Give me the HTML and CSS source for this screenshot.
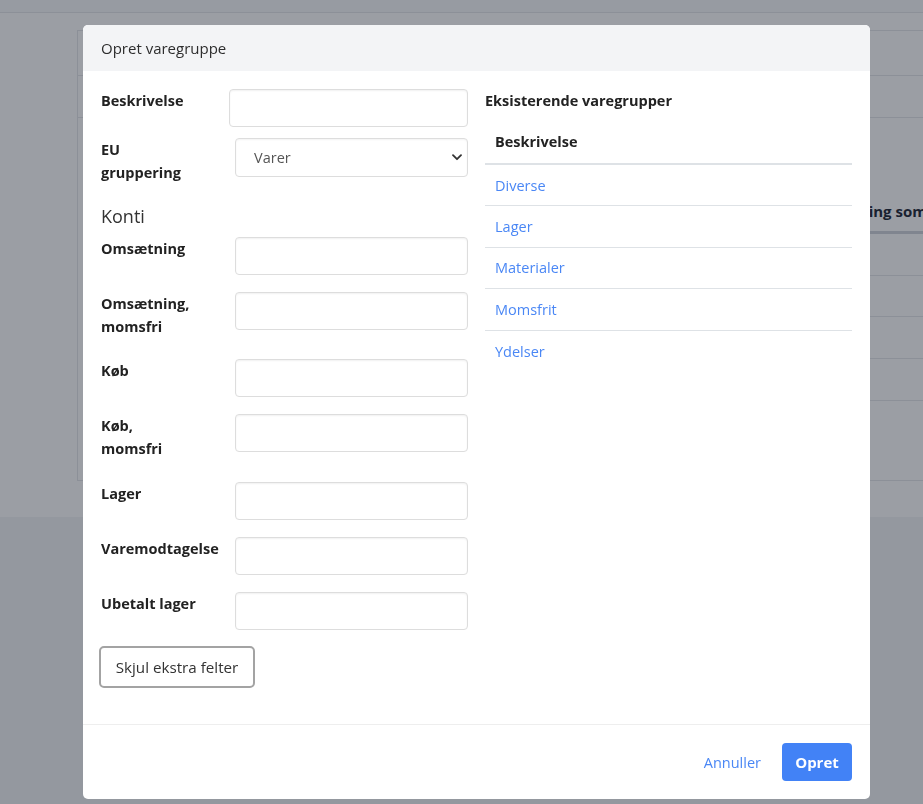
FILE: index.html
```html
<!DOCTYPE html>
<html lang="da">
<head>
<meta charset="utf-8">
<title>Opret varegruppe</title>
<link rel="stylesheet" href="styles.css">
</head>
<body>
<div class="page">
  <div class="topbar"></div>
  <div class="main">
    <div class="card">
      <div class="card-head"></div>
      <div class="card-tabs"></div>
      <div class="card-body">
        <div class="bg-row bg-row-head"><span></span><span>Visning som standard</span></div>
        <div class="bg-row"><span></span><span></span></div>
        <div class="bg-row"><span></span><span></span></div>
        <div class="bg-row"><span></span><span></span></div>
        <div class="bg-row"><span></span><span></span></div>
      </div>
    </div>
  </div>
</div>

<div class="overlay"></div>

<div class="modal">
  <div class="modal-head">Opret varegruppe</div>
  <div class="modal-body">
    <div class="col-left">
      <div class="frow frow-first">
        <label class="flabel">Beskrivelse</label>
        <input class="finput" type="text">
      </div>
      <div class="frow frow-eu">
        <label class="flabel">EU<br>gruppering</label>
        <div class="select-wrap">
          <select class="fselect"><option>Varer</option></select>
          <svg class="chev" width="10" height="7" viewBox="0 0 10 7"><path d="M1 1.2 5 5.2 9 1.2" fill="none" stroke="#333" stroke-width="1.8" stroke-linecap="round" stroke-linejoin="round"/></svg>
        </div>
      </div>
      <h3 class="konti">Konti</h3>
      <div class="frow">
        <label class="flabel">Omsætning</label>
        <input class="finput" type="text">
      </div>
      <div class="frow">
        <label class="flabel">Omsætning,<br>momsfri</label>
        <input class="finput" type="text">
      </div>
      <div class="frow">
        <label class="flabel">Køb</label>
        <input class="finput" type="text">
      </div>
      <div class="frow">
        <label class="flabel">Køb,<br>momsfri</label>
        <input class="finput" type="text">
      </div>
      <div class="frow">
        <label class="flabel">Lager</label>
        <input class="finput" type="text">
      </div>
      <div class="frow">
        <label class="flabel">Varemodtagelse</label>
        <input class="finput" type="text">
      </div>
      <div class="frow frow-last">
        <label class="flabel">Ubetalt lager</label>
        <input class="finput" type="text">
      </div>
      <button class="btn-toggle" type="button">Skjul ekstra felter</button>
    </div>
    <div class="col-right">
      <div class="exist-title">Eksisterende varegrupper</div>
      <table class="gtable">
        <thead><tr><th>Beskrivelse</th></tr></thead>
        <tbody>
          <tr><td><a href="#">Diverse</a></td></tr>
          <tr><td><a href="#">Lager</a></td></tr>
          <tr><td><a href="#">Materialer</a></td></tr>
          <tr><td><a href="#">Momsfrit</a></td></tr>
          <tr><td><a href="#">Ydelser</a></td></tr>
        </tbody>
      </table>
    </div>
  </div>
  <div class="modal-foot">
    <a class="btn-link" href="#">Annuller</a>
    <button class="btn-primary" type="button">Opret</button>
  </div>
</div>
</body>
</html>
```
FILE: styles.css
```css
* { box-sizing: border-box; }
html, body { margin: 0; padding: 0; }
body {
  font-family: "Open Sans", "Noto Sans", "Liberation Sans", sans-serif;
  font-size: 14px;
  color: #212529;
  background: #f3f4f6;
  width: 923px;
  height: 804px;
  overflow: hidden;
}

/* background page */
.page { width: 923px; }
.topbar {
  height: 13px;
  background: #f9fafb;
  border-bottom: 1px solid #e5e7eb;
}
.main {
  background: #ffffff;
  height: 504px;
  padding: 17px 0 0 77px;
}
.card {
  width: 1000px;
  height: 451px;
  border: 1px solid #e5e7eb;
  background: #fff;
}
.card-head { height: 45px; border-bottom: 1px solid #e5e7eb; }
.card-tabs { height: 42px; border-bottom: 1px solid #e5e7eb; }
.card-body { padding: 73px 0 0 20px; }
.bg-row {
  display: grid;
  grid-template-columns: 739px 1fr;
  align-items: center;
  height: 41.7px;
  border-bottom: 1px solid #e5e7eb;
}
.bg-row-head {
  height: 43px;
  border-bottom: 3px solid #d1d5db;
  font-weight: 700;
  font-size: 15px;
  color: #1f2937;
  line-height: 20px;
  white-space: nowrap;
}

.overlay {
  position: fixed;
  inset: 0;
  background: rgba(17, 24, 39, 0.42);
}

/* modal */
.modal {
  position: absolute;
  left: 83px;
  top: 25px;
  width: 787px;
  height: 774px;
  background: #fff;
  border-radius: 5px;
  overflow: hidden;
  display: flex;
  flex-direction: column;
}
.modal-head {
  height: 46px;
  background: #f3f4f6;
  padding: 0 18px;
  display: flex;
  align-items: center;
  font-size: 15px;
  color: #2d2d2d;
}
.modal-body {
  flex: 1;
  padding: 18px 18px 0;
  display: grid;
  grid-template-columns: 367px 367px;
  column-gap: 17px;
  align-items: start;
}

.frow {
  display: grid;
  grid-template-columns: 134px 1fr;
  align-items: start;
  margin-bottom: 17px;
}
.frow-first { grid-template-columns: 128px 1fr; margin-bottom: 11px; }
.frow-eu { margin-bottom: 0; }
.frow-last { margin-bottom: 16px; }
.flabel {
  font-weight: 700;
  font-size: 14.5px;
  line-height: 23px;
  color: #222;
  padding-bottom: 4.5px;
}
.finput {
  height: 38px;
  width: 100%;
  border: 1px solid #dddddd;
  border-radius: 4px;
  box-shadow: inset 0 1px 2px rgba(0,0,0,0.06);
  background: #fff;
  font: inherit;
  padding: 0 12px;
}
.select-wrap { position: relative; }
.fselect {
  appearance: none;
  -webkit-appearance: none;
  height: 39px;
  width: 100%;
  border: 1px solid #dddddd;
  border-radius: 4px;
  background: #fff;
  box-shadow: inset 0 1px 2px rgba(0,0,0,0.05);
  font: inherit;
  font-size: 14.5px;
  color: #555;
  padding: 0 18px;
}
.chev {
  position: absolute;
  right: 6px;
  top: 16px;
  pointer-events: none;
}
.konti {
  margin: 15px 0 9px;
  font-size: 18px;
  font-weight: 400;
  line-height: 24px;
  color: #333;
}
.btn-toggle {
  margin-left: -2px;
  height: 42px;
  width: 156px;
  background: #fff;
  border: 2px solid #a3a3a3;
  border-radius: 5px;
  font: inherit;
  font-size: 15.2px;
  color: #333;
  padding: 0;
}

.exist-title {
  font-weight: 700;
  font-size: 14.5px;
  line-height: 23px;
  color: #222;
}
.gtable {
  margin-top: 10px;
  width: 100%;
  border-collapse: collapse;
}
.gtable th {
  text-align: left;
  font-weight: 700;
  font-size: 14.5px;
  color: #222;
  height: 42px;
  padding: 0 10px 2px;
  border-bottom: 2px solid #dee2e6;
}
.gtable td {
  height: 41.5px;
  padding: 0 10px;
  border-bottom: 1px solid #dee2e6;
  font-size: 14.5px;
}
.gtable tr:last-child td { border-bottom: none; }
.gtable a { color: #4a87f5; text-decoration: none; }

.modal-foot {
  height: 75px;
  border-top: 1px solid #eeeeee;
  display: flex;
  align-items: center;
  justify-content: flex-end;
  padding: 0 18px;
  gap: 21px;
}
.btn-link {
  color: #4a87f5;
  text-decoration: none;
  font-size: 14.5px;
}
.btn-primary {
  height: 38px;
  width: 70px;
  background: #4282f6;
  color: #fff;
  border: none;
  border-radius: 4px;
  font: inherit;
  font-weight: 700;
  font-size: 15px;
  padding: 0;
}
```
